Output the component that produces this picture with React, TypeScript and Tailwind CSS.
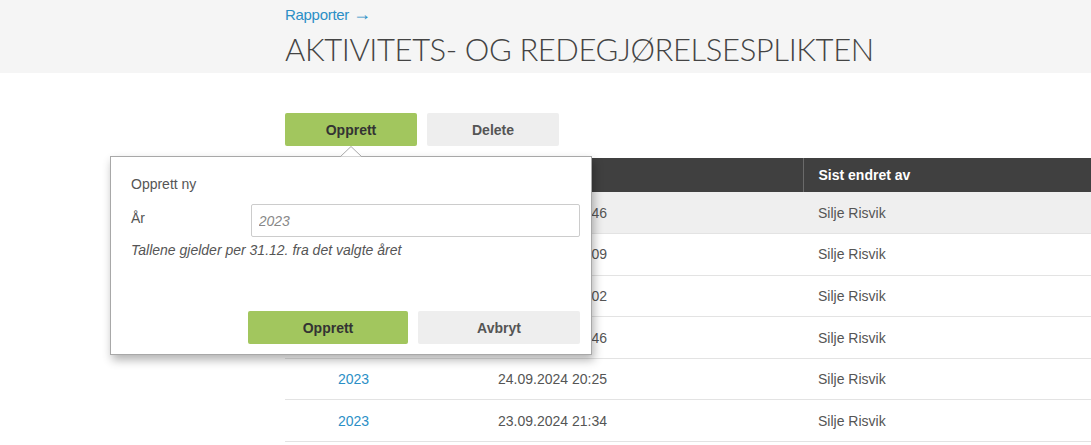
import { useState } from "react";

type Row = {
  year: string;
  changed: string;
  by: string;
};

export default function App() {
  const rows: Row[] = [
    { year: "2023", changed: "26.09.2024 12:46", by: "Silje Risvik" },
    { year: "2023", changed: "26.09.2024 09:09", by: "Silje Risvik" },
    { year: "2023", changed: "25.09.2024 15:02", by: "Silje Risvik" },
    { year: "2023", changed: "25.09.2024 10:46", by: "Silje Risvik" },
    { year: "2023", changed: "24.09.2024 20:25", by: "Silje Risvik" },
    { year: "2023", changed: "23.09.2024 21:34", by: "Silje Risvik" },
  ];

  const [year, setYear] = useState("");

  return (
    <div className="relative min-h-[445px] overflow-hidden bg-white font-['Liberation_Sans',Arial,sans-serif] text-sm text-[#555]">
      {/* topp */}
      <div className="h-[73px] bg-[#f5f5f5] pl-[285px] pt-[5px]">
        <a href="#" className="text-[15px] leading-[20px] tracking-[-0.3px] text-[#2b8fc6]">
          Rapporter <span className="text-[18px] leading-[18px]">→</span>
        </a>
        <h1 className="mt-[4px] font-['Lato',sans-serif] text-[31px] font-light leading-[40px] tracking-[-0.4px] text-[#444]">
          AKTIVITETS- OG REDEGJØRELSESPLIKTEN
        </h1>
      </div>

      <div className="pl-[285px] pt-[40px]">
        {/* knapper */}
        <div className="flex gap-[10px]">
          <button className="h-[33px] w-[132px] rounded-[2px] bg-[#a2c65e] font-bold text-[#333]">
            Opprett
          </button>
          <button className="h-[33px] w-[132px] rounded-[2px] bg-[#eeeeee] font-bold text-[#555]">
            Delete
          </button>
        </div>

        {/* tabell */}
        <table className="mt-[12px] w-[900px] border-collapse text-left">
          <thead>
            <tr className="h-[34px] bg-[#404040] text-white">
              <th className="w-[198px] pl-[53px] font-bold">År</th>
              <th className="w-[320px] border-r border-[#6a6a6a] pl-[15px] font-bold">Sist endret</th>
              <th className="pl-[15px] font-bold">Sist endret av</th>
            </tr>
          </thead>
          <tbody>
            {rows.map((row, i) => (
              <tr
                key={i}
                className={`h-[41.6px] border-b border-[#e3e3e3] ${i === 0 ? "bg-[#efefef]" : "bg-white"}`}
              >
                <td className="pl-[53px]">
                  <a href="#" className="text-[#2b8fc6]">
                    {row.year}
                  </a>
                </td>
                <td className="pl-[15px]">{row.changed}</td>
                <td className="pl-[15px]">{row.by}</td>
              </tr>
            ))}
          </tbody>
        </table>
      </div>

      {/* popover: opprett ny */}
      <div className="absolute left-[110px] top-[156px] h-[199px] w-[482px] border border-[#a8a8a8] bg-white pl-[20px] pr-[11px] pt-[16px] shadow-[2px_5px_9px_rgba(0,0,0,0.3)]">
        <svg
          className="absolute -top-[11px] left-[229px]"
          width="22"
          height="12"
          viewBox="0 0 22 12"
        >
          <polygon points="0,11 11,0.5 22,11" fill="white" stroke="#a8a8a8" strokeWidth="1" />
          <rect x="0" y="11" width="22" height="2" fill="white" />
        </svg>
        <div className="leading-[22px]">Opprett ny</div>
        <div className="mt-[9px] flex items-center">
          <label className="w-[120px] -translate-y-[3px]">År</label>
          <input
            value={year}
            onChange={(e) => setYear(e.target.value)}
            placeholder="2023"
            className="h-[33px] w-[330px] rounded-[2px] border border-[#cccccc] px-[7px] italic text-[#555] placeholder:text-[#888] focus:outline-none"
          />
        </div>
        <p className="mt-[4px] italic leading-[18px]">Tallene gjelder per 31.12. fra det valgte året</p>
        <div className="mt-[52px] flex justify-end gap-[10px]">
          <button className="h-[33px] w-[160px] rounded-[2px] bg-[#a2c65e] font-bold text-[#333]">
            Opprett
          </button>
          <button className="h-[33px] w-[162px] rounded-[2px] bg-[#eeeeee] font-bold text-[#555]">
            Avbryt
          </button>
        </div>
      </div>
    </div>
  );
}
